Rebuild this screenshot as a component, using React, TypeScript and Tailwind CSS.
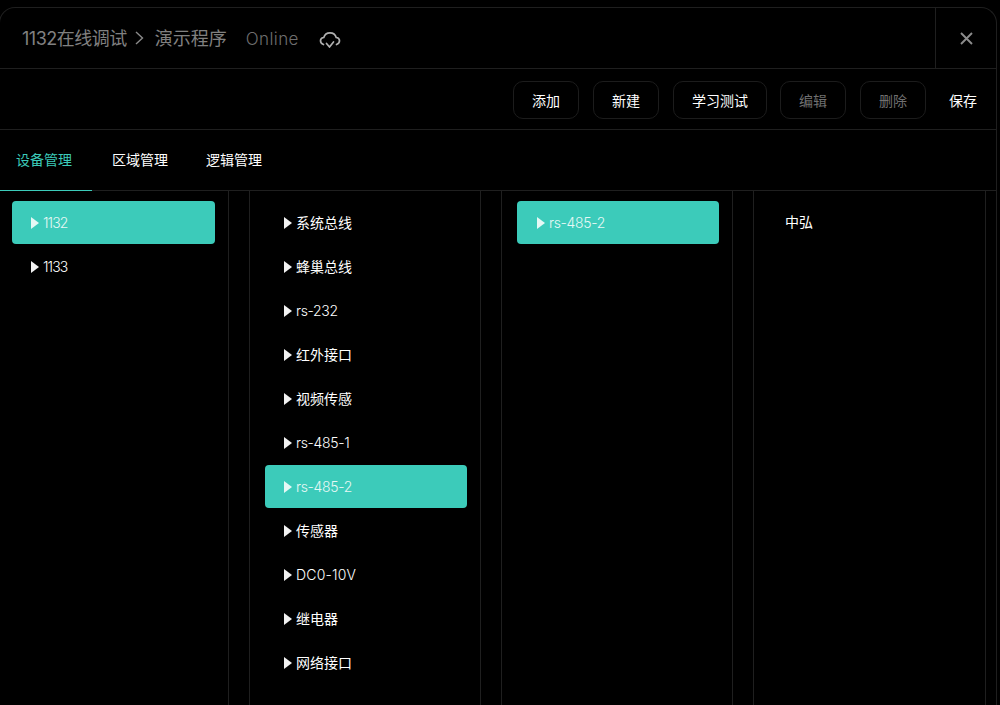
import React from "react";

function Item({ label, active, inset }: { label: string; active?: boolean; inset?: boolean }) {
  const latin = /^[\x00-\x7f]+$/.test(label);
  const digits = /^\d+$/.test(label);
  const textClass = digits
    ? "font-light tracking-[-0.9px]"
    : label === "DC0-10V"
      ? "font-light tracking-[0.2px]"
      : latin
        ? "font-light tracking-[-0.35px]"
        : "font-normal -mt-px";
  return (
    <div className={`mb-px flex h-[43px] items-center rounded text-[14px] ${inset ? "pl-[20px]" : "pl-[19px]"} ${active ? "bg-[#3ccbba] text-[#e6f8f5]" : "text-white"}`}>
      <svg width="8" height="12" viewBox="0 0 8 12" className="mr-[4px] shrink-0">
        <path d="M0 0 L8 6 L0 12 Z" fill={active ? "#e6f8f5" : "#f2f2f2"} />
      </svg>
      <span className={textClass}>{label}</span>
    </div>
  );
}

function ToolButton({ label, w, disabled }: { label: string; w: string; disabled?: boolean }) {
  return (
    <button className={`h-[38px] ${w} shrink-0 rounded-[10px] border border-[#1c1c1c] text-[14px] font-normal ${disabled ? "text-[#707070]" : "text-white"}`}>
      {label}
    </button>
  );
}

const col2 = ["系统总线", "蜂巢总线", "rs-232", "红外接口", "视频传感", "rs-485-1", "rs-485-2", "传感器", "DC0-10V", "继电器", "网络接口"];

export default function App() {
  return (
    <div className="h-[705px] w-[1000px] overflow-hidden bg-black pt-[7px] font-['Inter','Noto_Sans_CJK_SC',sans-serif]">
      <div className="-ml-px h-[698px] w-[998px] rounded-t-[16px] border border-b-0 border-[#1f1f1f]">
        <header className="flex h-[61px] items-stretch border-b border-[#1f1f1f]">
          <div className="flex flex-1 items-center pl-[22px] text-[18px] text-[#808080]">
            <span className="tracking-[-0.5px]">1132在线调试</span>
            <svg width="9" height="14" viewBox="0 0 9 14" className="ml-[8px]" fill="none" stroke="#8a8a8a" strokeWidth="1.4">
              <path d="M1 1 L7.5 7 L1 13" />
            </svg>
            <span className="ml-[11px]">演示程序</span>
            <span className="ml-[19px] mt-[3px] text-[17px] font-light tracking-[0.4px] text-[#6e6e6e]">Online</span>
            <svg width="22" height="20" viewBox="0 0 22 20" className="ml-[20px] mt-[3px]" fill="none" stroke="#b0b0b0" strokeWidth="1.7" strokeLinecap="round" strokeLinejoin="round">
              <path d="M4.5 14.5 C2.5 13.8 1.5 12.4 1.5 10.8 C1.5 8.9 3 7.6 4.8 7.5 C5.6 4.6 8 2.8 11 2.8 C14 2.8 16.4 4.6 17.2 7.5 C19 7.6 20.5 8.9 20.5 10.8 C20.5 12.4 19.5 13.8 17.5 14.5" />
              <path d="M7.5 13.5 L10.5 17 L14.5 12" />
            </svg>
          </div>
          <div className="flex w-[61px] items-center justify-center border-l border-[#1f1f1f] pt-px">
            <svg width="13" height="13" viewBox="0 0 13 13" fill="none" stroke="#8c8c8c" strokeWidth="1.9">
              <path d="M1 1 L12 12 M12 1 L1 12" />
            </svg>
          </div>
        </header>

        <div className="flex h-[61px] items-center gap-[14px] border-b border-[#1f1f1f] pl-[513px] pt-[2px]">
          <ToolButton label="添加" w="w-[66px]" />
          <ToolButton label="新建" w="w-[66px]" />
          <ToolButton label="学习测试" w="w-[94px]" />
          <div className="-ml-px"><ToolButton label="编辑" w="w-[66px]" disabled /></div>
          <ToolButton label="删除" w="w-[66px]" disabled />
          <span className="ml-[9px] text-[14px] font-normal text-white">保存</span>
        </div>

        <nav className="flex h-[61px] border-b border-[#1f1f1f] text-[14px] font-normal">
          <div className="relative flex w-[92px] items-center pl-[16px] pb-[1px] text-[#3ccbba]">
            设备管理
            <div className="absolute -bottom-px left-0 h-px w-full bg-[#3ccbba]" />
          </div>
          <div className="ml-[20px] flex items-center pb-[1px] text-white">区域管理</div>
          <div className="ml-[38px] flex items-center pb-[1px] text-white">逻辑管理</div>
        </nav>

        <div className="flex h-[515px]">
          <section className="w-[229px] border-r border-[#1f1f1f] pl-[12px] pr-[13px] pt-[10px]">
            <Item label="1132" active />
            <Item label="1133" />
          </section>
          <section className="ml-[20px] w-[232px] border-x border-[#1f1f1f] pl-[15px] pr-[13px] pt-[10px]">
            {col2.map((l, i) => (
              <Item key={l} label={l} active={i === 6} />
            ))}
          </section>
          <section className="ml-[20px] w-[232px] border-x border-[#1f1f1f] pl-[15px] pr-[13px] pt-[10px]">
            <Item label="rs-485-2" active inset />
          </section>
          <section className="ml-[20px] w-[233px] border-x border-[#1f1f1f] pl-[31px] pt-[10px]">
            <div className="-mt-px flex h-[43px] items-center text-[14px] font-normal text-white">中弘</div>
          </section>
        </div>
      </div>
    </div>
  );
}
